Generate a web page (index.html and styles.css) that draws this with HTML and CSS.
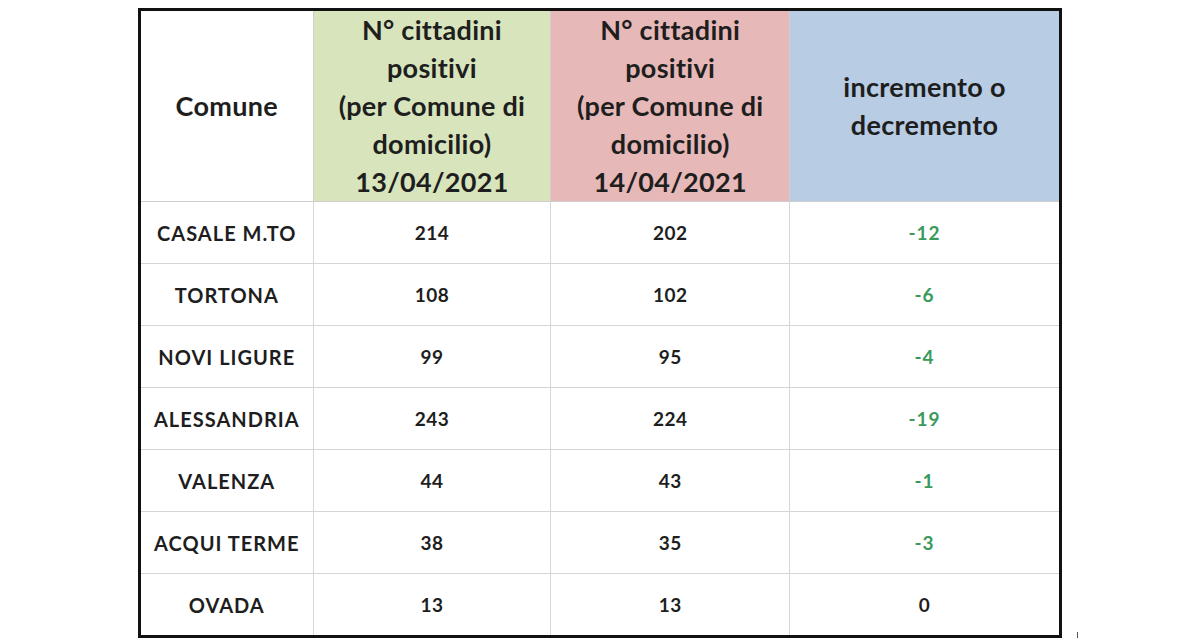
FILE: index.html
```html
<!DOCTYPE html>
<html lang="it">
<head>
<meta charset="utf-8">
<title>Positivi per Comune</title>
<link rel="stylesheet" href="styles.css">
</head>
<body>
<div class="wrap">
  <table class="tbl">
    <colgroup>
      <col class="c1"><col class="c2"><col class="c3"><col class="c4">
    </colgroup>
    <thead>
      <tr>
        <th class="h-white">Comune</th>
        <th class="h-green">N° cittadini<br>positivi<br>(per Comune di<br>domicilio)<br>13/04/2021</th>
        <th class="h-red">N° cittadini<br>positivi<br>(per Comune di<br>domicilio)<br>14/04/2021</th>
        <th class="h-blue">incremento o<br>decremento</th>
      </tr>
    </thead>
    <tbody>
      <tr><td class="name">CASALE M.TO</td><td>214</td><td>202</td><td class="neg">-12</td></tr>
      <tr><td class="name">TORTONA</td><td>108</td><td>102</td><td class="neg">-6</td></tr>
      <tr><td class="name">NOVI LIGURE</td><td>99</td><td>95</td><td class="neg">-4</td></tr>
      <tr><td class="name">ALESSANDRIA</td><td>243</td><td>224</td><td class="neg">-19</td></tr>
      <tr><td class="name">VALENZA</td><td>44</td><td>43</td><td class="neg">-1</td></tr>
      <tr><td class="name">ACQUI TERME</td><td>38</td><td>35</td><td class="neg">-3</td></tr>
      <tr><td class="name">OVADA</td><td>13</td><td>13</td><td>0</td></tr>
    </tbody>
  </table>
  <span class="tick"></span>
</div>
</body>
</html>
```

FILE: styles.css
```css
html, body {
  margin: 0;
  padding: 0;
  background: #ffffff;
}

body {
  font-family: Lato, "Liberation Sans", sans-serif;
  color: #1e1e1e;
}

.wrap {
  position: relative;
  width: 924px;
  margin: 8px auto 0;
}

.tbl {
  width: 924px;
  border-collapse: collapse;
  border: 3px solid #111111;
  table-layout: fixed;
}

.c1 { width: 173px; }
.c2 { width: 237px; }
.c3 { width: 238px; }
.c4 { width: 270px; }

.tbl th {
  height: 190px;
  padding: 0;
  font-size: 27px;
  line-height: 38px;
  font-weight: 700;
  letter-spacing: 0.3px;
  text-align: center;
  vertical-align: middle;
  border: 1px solid #cfcfcf;
  border-top: none;
  white-space: nowrap;
}

.h-white { background: #ffffff; }
.h-green { background: #d8e4bc; }
.h-red { background: #e6b8b7; }
.h-blue { background: #b8cce4; }

.tbl td {
  height: 61px;
  padding: 0;
  font-size: 19px;
  font-weight: 700;
  letter-spacing: 0.5px;
  text-align: center;
  vertical-align: middle;
  border: 1px solid #d6d6d6;
}

.tbl td.name {
  font-size: 20px;
  letter-spacing: 1px;
  white-space: nowrap;
}

.tbl td.neg {
  color: #3a9a5e;
  font-size: 19px;
  letter-spacing: 1px;
}

.tick {
  position: absolute;
  left: 939px;
  top: 624px;
  width: 1px;
  height: 10px;
  background: #555555;
}
```
